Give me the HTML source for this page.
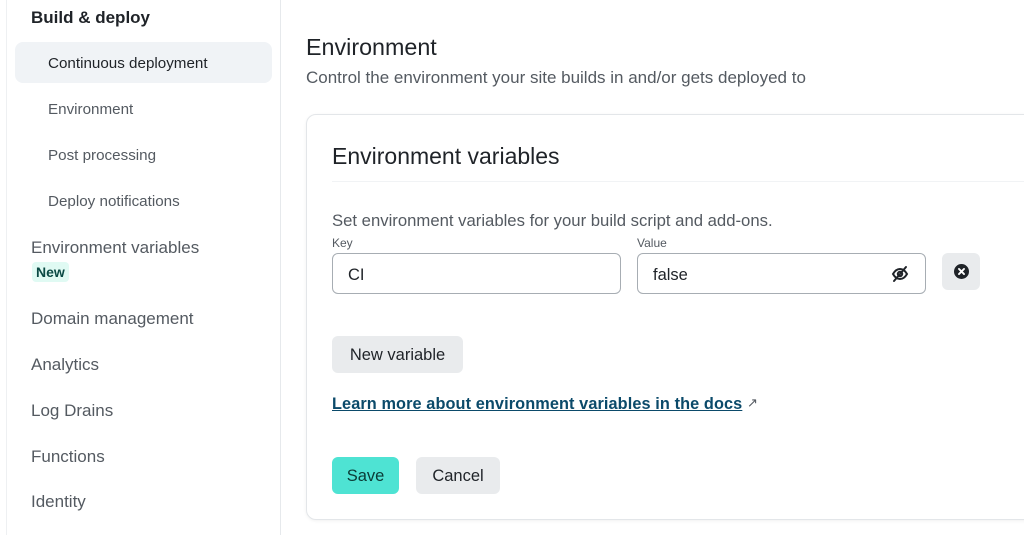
<!DOCTYPE html>
<html><head><meta charset="utf-8"><style>
*{box-sizing:border-box;margin:0;padding:0}
body{width:1024px;height:525px;overflow:hidden;background:#fff;font-family:"Liberation Sans",sans-serif;color:#1f2328;position:relative}
.side{position:absolute;left:6px;top:-10px;width:275px;height:545px;border-left:1px solid #eef0f2;border-right:1px solid #e6e9ec}
.a{position:absolute;font-size:17px;color:#545a61}
.h{position:absolute;left:31px;top:8px;font-size:17px;font-weight:bold;color:#1f2328}
.sub{position:absolute;left:48px;font-size:15.2px;color:#545a61}
.sel{position:absolute;left:15px;top:42px;width:257px;height:41px;background:#f0f3f6;border-radius:8px}
.new{position:absolute;left:32px;top:262px;background:#e0faf3;color:#0b4a44;font-weight:bold;font-size:14px;padding:2px 4px;border-radius:4px}
.card{position:absolute;left:306px;top:114px;width:740px;height:406px;border:1px solid #e3e6e9;border-radius:10px;box-shadow:0 1px 3px rgba(0,0,0,.06)}
.inp{position:absolute;top:253px;height:41px;border:1px solid #a7adb3;border-radius:6px;font-size:16.5px;padding:12px 15px;color:#1f2328}
.lbl{position:absolute;top:236px;font-size:12px;color:#545a61}
.btn{position:absolute;border-radius:6px;font-size:16.5px;text-align:center}
</style></head><body>
<div class="side"></div>
<div class="h">Build &amp; deploy</div>
<div class="sel"></div>
<div class="sub" style="top:55px;color:#1f2328">Continuous deployment</div>
<div class="sub" style="top:101px">Environment</div>
<div class="sub" style="top:147px">Post processing</div>
<div class="sub" style="top:193px">Deploy notifications</div>
<div class="a" style="left:31px;top:238px">Environment variables</div>
<div class="new">New</div>
<div class="a" style="left:31px;top:309px">Domain management</div>
<div class="a" style="left:31px;top:355px">Analytics</div>
<div class="a" style="left:31px;top:401px">Log Drains</div>
<div class="a" style="left:31px;top:447px">Functions</div>
<div class="a" style="left:31px;top:492px">Identity</div>

<div style="position:absolute;left:306px;top:34px;font-size:23.3px;color:#1f2328">Environment</div>
<div style="position:absolute;left:306px;top:68px;font-size:17px;color:#545a61">Control the environment your site builds in and/or gets deployed to</div>
<div class="card"></div>
<div style="position:absolute;left:332px;top:143px;font-size:23px;color:#1f2328">Environment variables</div>
<div style="position:absolute;left:332px;top:181px;width:700px;border-top:1px solid #f1f3f5"></div>
<div style="position:absolute;left:332px;top:211px;font-size:16.7px;color:#545a61">Set environment variables for your build script and add-ons.</div>
<div class="lbl" style="left:332px">Key</div>
<div class="lbl" style="left:637px">Value</div>
<div class="inp" style="left:332px;width:289px">CI</div>
<div class="inp" style="left:637px;width:289px">false
<svg style="position:absolute;right:16px;top:11px" width="18" height="18" viewBox="0 0 18 18" fill="none" stroke="#1f2328" stroke-width="2" stroke-linecap="round"><path d="M2 9c2-3.5 4.5-5 7-5s5 1.5 7 5c-2 3.5-4.5 5-7 5s-5-1.5-7-5z"/><circle cx="9" cy="9" r="2.2"/><path d="M15 2L3 16"/></svg></div>
<div class="btn" style="left:942px;top:253px;width:38px;height:37px;background:#e9ebed">
<svg style="margin-top:11px" width="15" height="15" viewBox="0 0 16 16"><circle cx="8" cy="8" r="8" fill="#1f2328"/><path d="M5.3 5.3l5.4 5.4M10.7 5.3l-5.4 5.4" stroke="#fff" stroke-width="2" stroke-linecap="round"/></svg></div>
<div class="btn" style="left:332px;top:336px;width:131px;height:37px;background:#e9ebed;padding-top:10px">New variable</div>
<div style="position:absolute;left:332px;top:395px;font-size:16.3px;font-weight:bold;color:#0b4a6a;text-decoration:underline;letter-spacing:0.1px">Learn more about environment variables in the docs</div>
<div style="position:absolute;left:747px;top:395px;font-size:13px;color:#545a61">↗</div>
<div class="btn" style="left:332px;top:457px;width:67px;height:37px;background:#4ee3d3;padding-top:10px;color:#0b3b36">Save</div>
<div class="btn" style="left:416px;top:457px;width:84px;height:37px;background:#e9ebed;padding-top:10px">Cancel</div>
</body></html>
